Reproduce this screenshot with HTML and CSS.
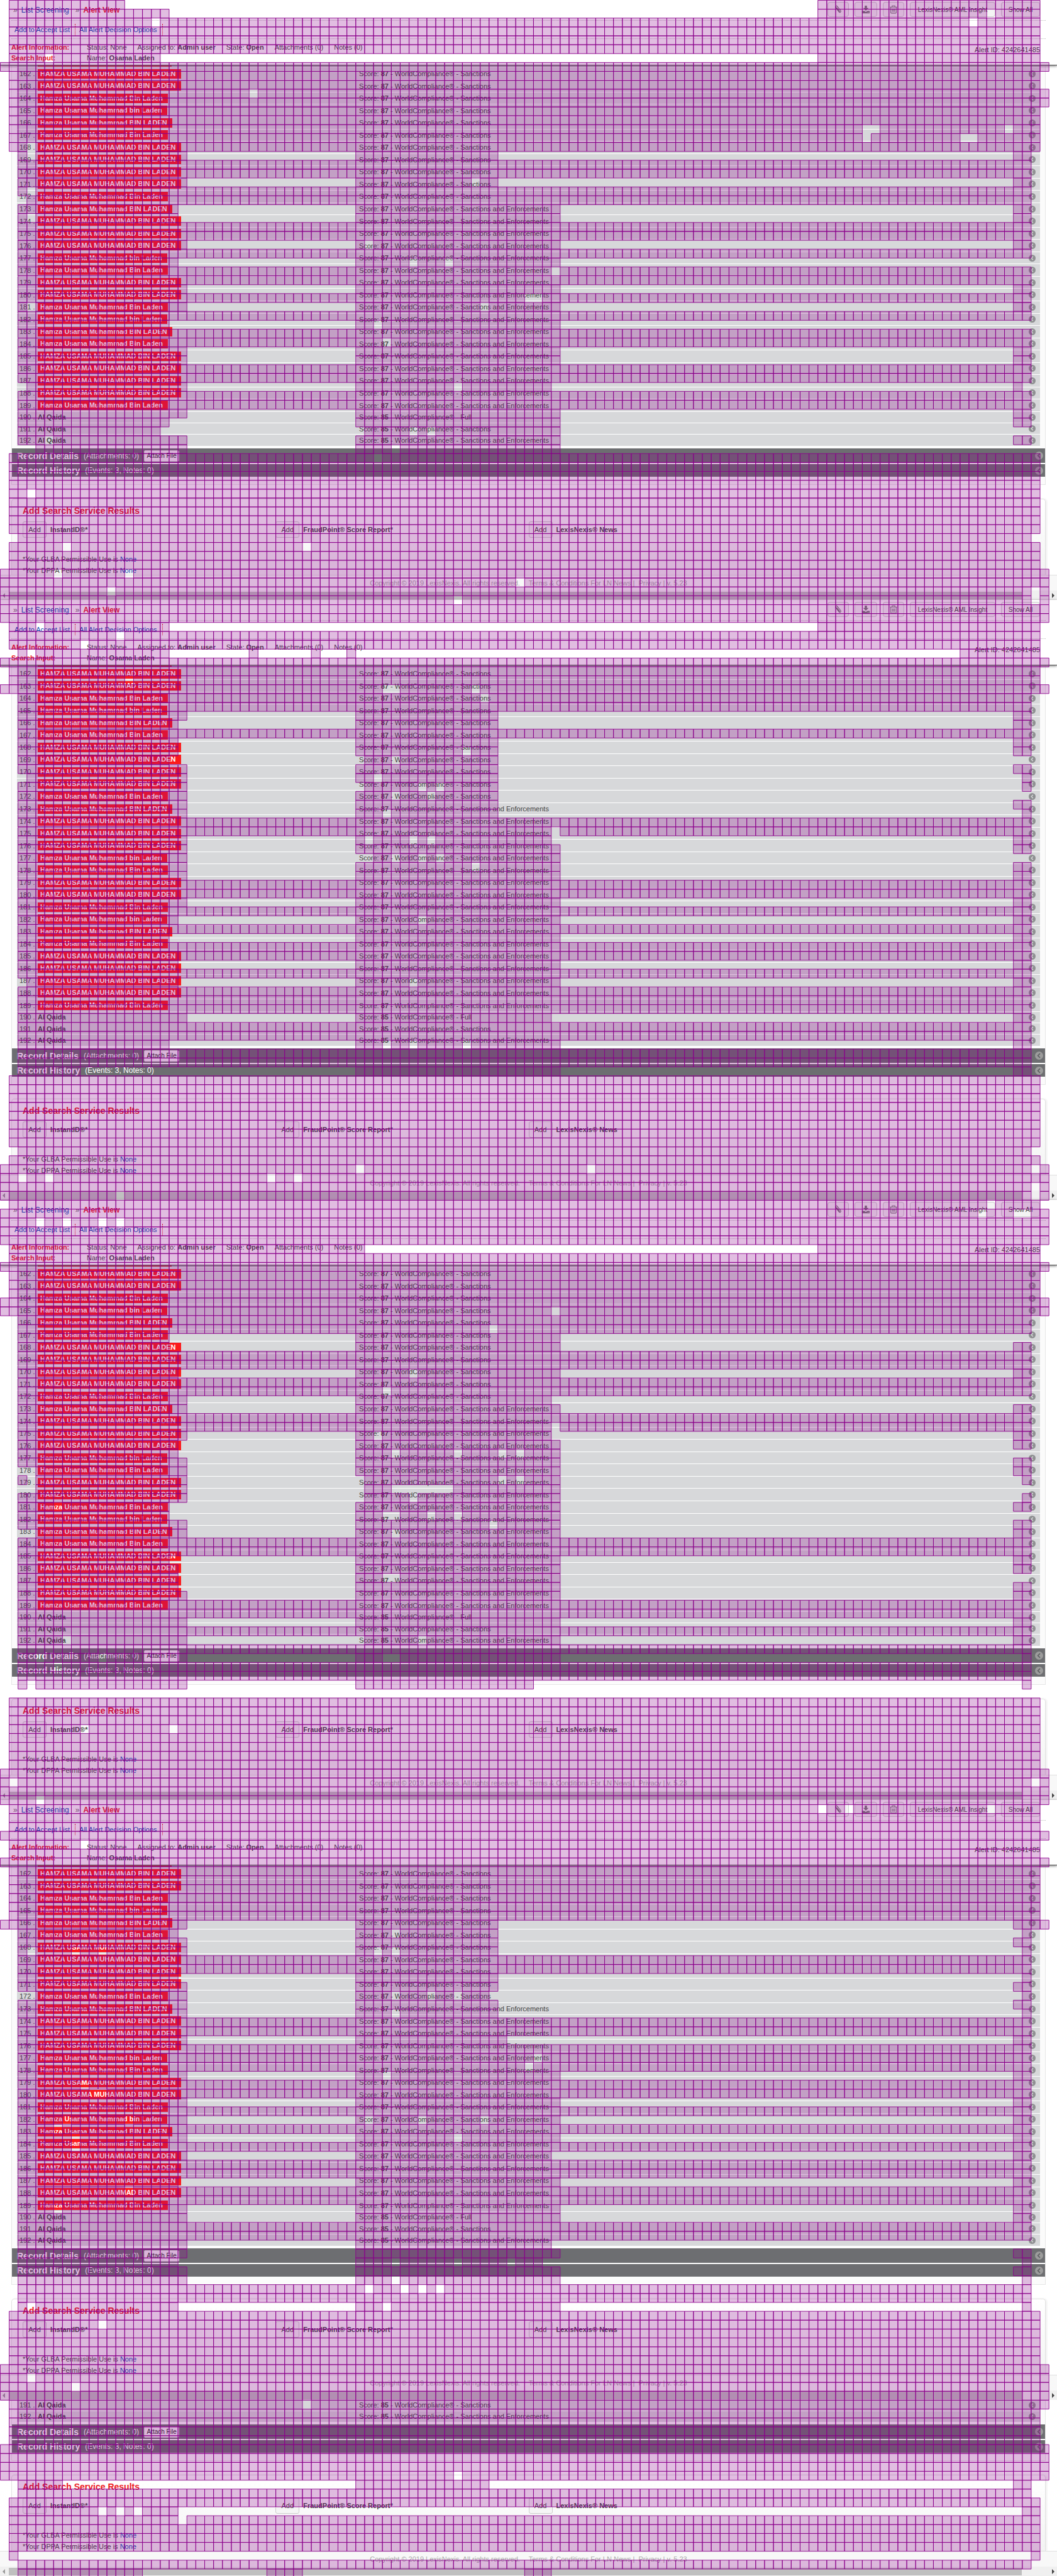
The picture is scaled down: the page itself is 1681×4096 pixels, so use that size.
FILE: index.html
```html
<!DOCTYPE html>
<html lang="en">
<head>
<meta charset="utf-8">
<title>Alert View</title>
<link rel="stylesheet" href="styles.css">
</head>
<body>
<main class="capture">
  <svg class="diff" viewBox="0 0 1903 4637" preserveAspectRatio="none" aria-hidden="true"><path class="diff-cells" transform="translate(.5 .5)" d=""/></svg>
</main>

<template class="tpl-header">
  <header class="header">
    <div class="topbar">
      <nav class="crumbs"><span class="sep">»</span> <a href="#">List Screening</a> <span class="sep second">»</span> <strong>Alert View</strong></nav>
      <div class="tools">
        <button class="tool clip" aria-label="Attach"><svg viewBox="0 0 16 16" width="14" height="14"><path d="M3 4.2 9.6 12.6a1.9 1.9 0 0 0 3-2.3L6.2 2.2a1.5 1.5 0 0 0-2.4 1.8l6.4 8.1M5.6 5l5 6.4" fill="none" stroke="#777" stroke-width="1.3" stroke-linecap="round"/></svg></button>
        <button class="tool save" aria-label="Download"><svg viewBox="0 0 16 16" width="14" height="14"><path d="M6 1h4v4.5h3L8 10.3 3 5.5h3zM1 10.5h4l3 2 3-2h4V15H1z" fill="#777"/><path d="M11 13.4h1m1 0h1" stroke="#eee"/></svg></button>
        <button class="tool bin" aria-label="Delete"><svg viewBox="0 0 16 16" width="14" height="14"><path d="M1.5 3.7h13M5.5 3.5V1.5h5v2M3 4v9.5q0 1.2 1.2 1.2h7.6q1.2 0 1.2-1.2V4M5.8 6.2v6M8 6.2v6m2.2-6v6" fill="none" stroke="#777" stroke-width="1.2"/></svg></button>
        <button class="tool insight">LexisNexis® AML Insight</button>
        <button class="tool all">Show All</button>
      </div>
    </div>
    <nav class="actions"><a href="#">Add to Accept List</a><a href="#">All Alert Decision Options</a></nav>
    <div class="info">
      <div class="info-grid">
        <strong class="key">Alert Information:</strong>
        <div class="facts"><span>Status: None</span><span>Assigned to: <b>Admin user</b></span><span>State: <b>Open</b></span><span>Attachments (0)</span><span>Notes (0)</span></div>
        <strong class="key">Search Input:</strong>
        <div class="facts"><span>Name: <b>Osama Laden</b></span></div>
      </div>
      <div class="alert-id">Alert ID: 4242641485</div>
    </div>
  </header>
</template>

<template class="tpl-body">
  <section class="panel">
    <div class="list"><table class="matches"><colgroup><col class="c-num"><col class="c-name"><col><col class="c-icon"></colgroup><tbody></tbody></table></div>
    <div class="bar details"><h2>Record Details</h2><span>(Attachments: 0)</span><button class="attach">Attach File</button><svg class="chev" viewBox="0 0 14 14"><circle cx="7" cy="7" r="7" fill="#9c9c9c"/><path d="M8.6 3.4 5 7l3.6 3.6" fill="none" stroke="#606164" stroke-width="1.8"/></svg></div>
    <div class="bar history"><h2>Record History</h2><span>(Events: 3, Notes: 0)</span><svg class="chev" viewBox="0 0 14 14"><circle cx="7" cy="7" r="7" fill="#9c9c9c"/><path d="M8.6 3.4 5 7l3.6 3.6" fill="none" stroke="#606164" stroke-width="1.8"/></svg></div>
  </section>
  <section class="services">
    <h2>Add Search Service Results</h2>
    <div class="service-grid">
      <div class="service"><button>Add</button><b>InstantID®*</b></div>
      <div class="service"><button>Add</button><b>FraudPoint® Score Report*</b></div>
      <div class="service"><button>Add</button><b>LexisNexis® News</b></div>
    </div>
    <p class="use">*Your GLBA Permissible Use is <a href="#">None</a></p>
    <p class="use">*Your DPPA Permissible Use is <a href="#">None</a></p>
  </section>
  <footer class="footer"><span>Copyright © 2019 LexisNexis. All rights reserved.</span><span>Terms &amp; Conditions For LN News |&nbsp; Privacy | v. 5.23</span></footer>
  <div class="scroll"><i class="arrow left"></i><i class="thumb"></i><i class="arrow right"></i></div>
</template>
<script src="script.js"></script>
</body>
</html>
```
FILE: styles.css
```css
* { box-sizing: border-box; }
body {
  margin: 0;
  background: #fff;
  color: #444;
  font: 11px/14px "Liberation Sans", Arial, sans-serif;
}
a { color: #0b4db3; text-decoration: none; }
h2, p { margin: 0; }
button { font-family: inherit; color: #444; padding: 0; }
svg { display: block; }

.capture { position: relative; overflow: hidden; }
.diff { position: absolute; inset: 0; width: 100%; height: 100%; z-index: 5; pointer-events: none; }
.diff-cells { fill: rgba(139, 0, 139, .26); stroke: #8b008b; stroke-width: 1; }

/* header */
.header { position: relative; z-index: 1; background: #fff; border-bottom: 1px solid #4c4c4c; box-shadow: 0 1px 4px #777; }
.topbar { display: flex; justify-content: space-between; align-items: center; height: 33px; margin: 0 18px; padding: 0 9px 2px 3px; border-bottom: 1px dotted #bbb; }
.crumbs { display: flex; align-items: center; gap: 6px; font-size: 12px; padding-top: 2px; }
.crumbs strong { color: #ed1c24; }
.crumbs .sep { color: #777; }
.crumbs .second { margin-left: 4px; }
.tools { display: flex; gap: 9px; }
.tool { display: flex; align-items: center; justify-content: center; height: 24px; border: 1px solid #ccc; border-radius: 4px; background: #f4f4f4; font-size: 10px; }
.clip, .bin { width: 34px; }
.save { width: 36px; }
.insight { width: 136px; }
.all { width: 62px; }
.actions { display: flex; align-items: center; height: 29px; margin: 0 18px; padding-left: 5px; border-bottom: 1px dotted #bbb; }
.actions a { padding: 2px 8px 2px 0; margin-right: 6px; border-right: 1px dotted #ed1c24; }
.info { display: flex; justify-content: space-between; height: 41px; margin: 0 27px 0 18px; }
.info-grid { display: grid; grid-template-columns: 120px auto; grid-auto-rows: 17px; align-items: center; padding-top: 4px; }
.key { color: #ed1c24; }
.facts { display: flex; gap: 17px; }
.alert-id { padding-top: 10px; }

/* records */
.panel { margin: 0 18px; padding-bottom: 12px; border: 1px solid #e6e6e6; border-top: 0; background: #fbfbfb; }
.list { overflow: hidden; margin: 0 8px; padding-bottom: 3px; }
.matches { width: 100%; table-layout: fixed; border-collapse: collapse; height: 602px; }
.tail .matches { height: 36px; }
.tail tr:first-child { height: 17px; }
.above { position: relative; height: 4px; background: #d7d8da; border-bottom: 1px solid #fff; }
.above i { display: block; width: 213px; height: 2px; margin-left: 33px; background: #fb1a1c; }
.tail .above { display: none; }
.matches tr { background: #d7d8da; border-bottom: 1px solid #fff; }
.matches td { padding: 0; vertical-align: middle; white-space: nowrap; }
.matches td:first-child { padding-left: 4px; }
.c-num { width: 33px; }
.c-name { width: 31.4%; }
.c-icon { width: 26px; }
.name { display: block; width: max-content; font-weight: bold; color: #444; }
.hit { background: #fb1a1c; color: #fff; padding: 0 8px 0 4px; line-height: 15px; }
.dot { width: 11px; height: 11px; margin: 0 auto; }
.bar { display: flex; align-items: center; height: 23px; padding: 0 3px 0 8px; background: #6d6e71; color: #fff; font-size: 12px; }
.bar h2 { font-size: 14px; margin-right: 8px; }
.history { height: 20px; margin-top: 2px; }
.attach { height: 18px; width: 56px; margin-left: 8px; border: 1px solid #ddd; border-radius: 2px; background: #f5f5f5; color: #222; font-size: 10px; }
.chev { width: 13px; height: 13px; margin-left: auto; }

/* services */
.services { margin: 22px 18px 0; padding: 9px 17px 0; border: 1px solid #e2e2e2; border-bottom: 0; border-radius: 5px 5px 0 0; background: linear-gradient(#fff, #f3f3f3); box-shadow: 2px 0 3px #eee; }
.services h2 { color: #ed1c24; font-size: 14px; line-height: 18px; }
.service-grid { display: grid; grid-template-columns: repeat(4, 1fr); margin: 8px 0 27px; }
.service { display: flex; align-items: center; gap: 6px; }
.service button { width: 38px; height: 26px; border: 1px solid #ccc; border-radius: 3px; background: #f5f5f5; font-size: 11px; }
.use + .use { margin-top: 4px; }
.footer { position: relative; display: flex; justify-content: center; gap: 14px; height: 25px; padding: 5px 0; border-top: 1px solid #e0e0e0; background: #f8f8f8; color: #aaa; }
.scroll { position: relative; display: flex; align-items: center; justify-content: space-between; height: 15px; padding: 0 4px; background: #f0f0f0; }
.thumb { flex: 1; height: 12px; margin: 0 48px 0 6px; background: #c0c0c0; }
.arrow { border: 4px solid transparent; }
.left { border-left: 0; border-right-color: #999; }
.right { border-right: 0; border-left-color: #444; }
```
FILE: script.js
```js
const FULL = "HAMZA USAMA MUHAMMAD BIN LADEN";
const NAMES = { H: FULL, B: "Hamza Usama Muhammad Bin Laden", b: "Hamza Usama Muhammad bin Laden", D: "Hamza Usama Muhammad BIN LADEN", Q: "Al Qaida" };
const ORDER = "HHBbDBHHHHBDHHHbBHHBbDBHHHHBQQQ";
const DOT = '<svg class="dot" viewBox="0 0 12 12"><circle cx="6" cy="6" r="6" fill="#8e8f91"/><path d="M7.5 3 4.6 6l2.9 3" fill="none" stroke="#d7d8da" stroke-width="1.5"/></svg>';

function rowHtml(n) {
  const k = ORDER[n - 162];
  const score = n < 190 ? 87 : 85;
  const list = n === 190 ? "Full" : n < 173 || n === 191 ? "Sanctions" : "Sanctions and Enforcements";
  return `<tr><td>${n} .</td><td><a href="#" class="name${k === "Q" ? "" : " hit"}">${NAMES[k]}</a></td><td>Score: <b>${score}</b> - WorldCompliance® - ${list}</td><td>${DOT}</td></tr>`;
}

const capture = document.querySelector(".capture");
function addScreen(first, tail) {
  const screen = document.createElement("div");
  screen.className = tail ? "screen tail" : "screen";
  if (!tail) screen.append(document.querySelector(".tpl-header").content.cloneNode(true));
  screen.append(document.querySelector(".tpl-body").content.cloneNode(true));
  let rows = "";
  for (let n = first; n <= 192; n++) rows += rowHtml(n);
  screen.querySelector("tbody").innerHTML = rows;
  screen.querySelector(".list").insertAdjacentHTML("afterbegin", '<div class="above"><i></i></div>');
  capture.append(screen);
}
for (let i = 0; i < 4; i++) addScreen(162, false);
addScreen(191, true);

/* Changed cells, one entry per 16-unit row: column ranges, then "!" and the unchanged columns.
   F, W and G are the common full ranges; A, B, C, D the left, middle and right blocks. */
const R = { F: "1-117", W: "0-118", G: "2-116", A: "2-21", a: "2-20", z: "2-19", B: "40-63", C: "40-56", D: "114-116", d: "115-116" };
const CELLS = `1-14 92-117;1-19 92-117!111;F!17,109;F;F;F;1-18 92-117!5;W;F;F;1-118!28;1-118;F;F;F!97,98,113;F!97,108,109
F!3;A C D!3;G;G;A C D!53;G!3;3-116;a B D;a B D!3;G;G;A B D!41;G;a B!46,50;G!62;G
A B D;G!59,60;A B D!3,54;G;z B!42;G;G!43;A B D;A B D;G;G;3-21 40-62 114-115!51;G;G;A B D;z B D
2-18 41-63!46,48;A B D!5;4-21 B!44;F!42;F;F;F;F!3;F;F;F;F;G;F!7,34;F;F
W!6,14;W!58;W!12,116;W!51,116;W;W;1-19 92-117!4;F!13;F!9;z 28-29 35-36 39-40 108-117!3;W;F;F!14;W!43,44,53;G!54;G
A C D;a C D;G;a C D;a C D!52;z 41-56!44;A C D;3-21 C d!42;A 41-56 d!47,49;A C!44,48;A C D;A C d!43;G;G!62;A 40-62 D!41,46,48;A B D
A 42-63!44,47,49;A B D!53;A B D;G;G;A B D;G;a B D!47;G;z B D;G;G;a B D;G;3-20 B D!46;G
G;G;A 40-62 D;G;G;z B D!43,46,52;G;G;2-9 B D;F;F;F;F;F;F;F
F;G;F;W!40,66,116;W!2,5,30,33;W!116;W!13,116;F!111;W!110,114,115;W!4,7,11,13;W;W;1-41 92-117;F;W;F
F;F;W;W!62;G;G!55;z B;z B D;G;G;a B D!46;G;G!43;A 40-62;A B D;G
G!62;A 40-62 D!42;a B D;a B!44,51,56,58;A B D;4-21 B D;A 41-63 d!3,56,58;4-21 41-44 51-63;A 41-63 d!46;z B D!6;z B!43,44,48,51;A B D!55;4-21 B D!44;G;G;z B D
a B D;a B!43,44;a B D;A B D;G;G;A B D;G;A 41-63 D!7,47;G;A B d!4,11,43,44;G!6;G;A 40-60 d!3;;F
F;F;F!9,19;F;F;F;F;W;W!1,116;W;W!4;F!92,95,111;F;F;W;F!9
F;W;F;F;F;F;F;F;0-21 C 114-118;a C d!44;A C D;A C d!3,8,11,42,44;G;G;a C d;A C D
4-21 40-55 d!44,48,51;A C D;A C d!44;G;G;A 40-57 D;G;G!60;G!59;A B D!43;G!9;G!10,11;A B D;G;A B D!7,14,41,47,54;G!6
A B D!8,51;G!8;A 40-62 D;G;G;a B D;G!14;G;A B D!6;A B D;G;G;A 40-62;A B D;a 40-61 d!44,51,57;A B D
A B d!44;G!41,45,47,49;G;a B d!3,43;F;F!11;F;F;F;F;W;W!3;W!8;W;1-118!34;F
F;F;F;W;W;W;W!51;2-7 40-55 D;G;F;1-20 115-117!11,13,15;F!20;F;F;F;1-2 116-117
G;2-16 30-34 59-62`.split(/[;\n]/);

let d = "";
CELLS.forEach((entry, row) => {
  const [ranges, gaps = ""] = entry.split("!");
  const skip = new Set(gaps.split(",").map(g => g === "" ? -1 : +g));
  ranges.split(" ").filter(Boolean).forEach(token => {
    const [from, to] = (R[token] || token).split("-").map(Number);
    for (let col = from; col < to; col++) {
      if (!skip.has(col)) d += `M${col * 16} ${row * 16}h16v16h-16z`;
    }
  });
});
document.querySelector(".diff-cells").setAttribute("d", d);
```
